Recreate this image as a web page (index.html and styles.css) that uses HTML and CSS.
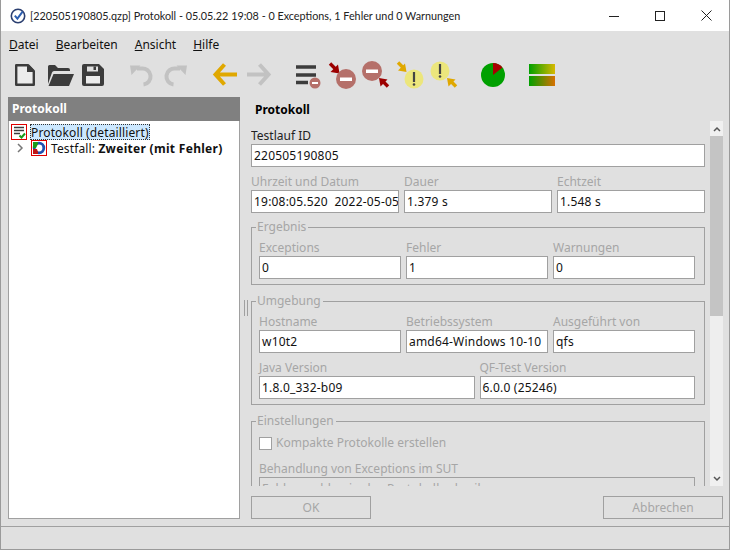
FILE: index.html
```html
<!DOCTYPE html>
<html lang="de">
<head>
    <meta charset="UTF-8">
    <title>Protokoll</title>
    <link rel="stylesheet" href="styles.css">
</head>
<body>
<div class="window">
    <div class="titlebar">
        <svg class="app-icon" width="16" height="16" viewBox="0 0 16 16">
            <circle cx="8" cy="8" r="6.7" fill="#fff" stroke="#2b3f70" stroke-width="1.6"/>
            <path d="M4.800 7.600 7.400 10.600 12.600 3.600" fill="none" stroke="#2d5fb0" stroke-width="2"/>
        </svg>
        <div class="title">[220505190805.qzp] Protokoll - 05.05.22 19:08 - 0 Exceptions, 1 Fehler und 0 Warnungen</div>
        <div class="winbtn"><svg width="10" height="10" viewBox="0 0 10 10"><path d="M0 5.500H10" stroke="#222"/></svg></div>
        <div class="winbtn"><svg width="10" height="10" viewBox="0 0 10 10"><rect x=".5" y=".5" width="9" height="9" fill="none" stroke="#222"/></svg></div>
        <div class="winbtn"><svg width="11" height="11" viewBox="0 0 11 11"><path d="M.5 .5 10.500 10.500M10.500 .5 .5 10.500" stroke="#222"/></svg></div>
    </div>

    <div class="menubar">
        <span class="menu"><u>D</u>atei</span>
        <span class="menu"><u>B</u>earbeiten</span>
        <span class="menu"><u>A</u>nsicht</span>
        <span class="menu"><u>H</u>ilfe</span>
    </div>

    <div class="toolbar">
        <div class="toolgroup">
            <svg class="tool" viewBox="0 0 34 32"><path d="M8.200 6.200H20L25.800 12V25.800H8.200Z" fill="#ececec" stroke="#3c3c3c" stroke-width="2.400" stroke-linejoin="round"/><path d="M19 6H21L26 11V13H19Z" fill="#3c3c3c"/></svg>
            <svg class="tool" viewBox="0 0 34 32"><path d="M6 25V7.500Q6 6 7.500 6H13L16 9H26Q28 9 28 11V12H12Q10.500 12 10 13.500Z" fill="#3c3c3c"/><path d="M6.500 27 11.500 15H32L27 27Z" fill="#3c3c3c"/></svg>
            <svg class="tool" viewBox="0 0 34 32"><path d="M8 5H23L28 10V25Q28 27 26 27H8Q6 27 6 25V7Q6 5 8 5Z" fill="#3c3c3c"/><rect x="11" y="7.500" width="11" height="5" fill="#e0e0e0"/><rect x="17.500" y="7.500" width="2.500" height="3.500" fill="#3c3c3c"/><rect x="10" y="17" width="14" height="7.500" fill="#ececec"/></svg>
        </div>
        <div class="toolgroup">
            <svg class="tool" viewBox="0 0 34 32"><path d="M12 9.500H16.500A8 8 0 0 1 18.500 25.500" fill="none" stroke="#c2c2c2" stroke-width="4"/><path d="M5 6.500H15.500L6.500 16Z" fill="#c2c2c2"/></svg>
            <svg class="tool" viewBox="0 0 34 32"><path d="M21 9.500H16.500A8 8 0 0 0 14.500 25.500" fill="none" stroke="#c2c2c2" stroke-width="4"/><path d="M28 6.500H17.500L26.500 16Z" fill="#c2c2c2"/></svg>
        </div>
        <div class="toolgroup">
            <svg class="tool" viewBox="0 0 34 32"><path d="M29 15.500H8M16.500 5.500 7.500 15.500 16.500 25.500" fill="none" stroke="#e0a800" stroke-width="4"/></svg>
            <svg class="tool" viewBox="0 0 34 32"><path d="M5 15.500H26M17.500 5.500 26.500 15.500 17.500 25.500" fill="none" stroke="#c2c2c2" stroke-width="4"/></svg>
        </div>
        <div class="toolgroup">
            <svg class="tool" viewBox="0 0 34 32">
                <path d="M5 8H25M5 16H25M5 23.500H17" stroke="#3c3c3c" stroke-width="3.400"/>
                <circle cx="24" cy="24" r="5.500" fill="#b5706a"/><rect x="21" y="23" width="6" height="2" fill="#fff"/>
            </svg>
            <svg class="tool" viewBox="0 0 34 32">
                <path d="M5 4.500 10.500 10" stroke="#9c0000" stroke-width="3.400"/><path d="M14.500 14.500 5.500 13 13 5.500Z" fill="#9c0000"/>
                <circle cx="21" cy="20" r="10" fill="#b5706a"/><rect x="15" y="18.500" width="12" height="3.500" fill="#fff"/>
            </svg>
            <svg class="tool" viewBox="0 0 34 32">
                <circle cx="13" cy="12" r="10" fill="#b5706a"/><rect x="7" y="10.500" width="12" height="3.500" fill="#fff"/>
                <path d="M29 27.500 24 22.500" stroke="#9c0000" stroke-width="3.400"/><path d="M20 19 28.500 20.500 21.500 27.500Z" fill="#9c0000"/>
            </svg>
            <svg class="tool" viewBox="0 0 34 32">
                <path d="M5 3.500 10 8.500" stroke="#e0a800" stroke-width="3.400"/><path d="M13.500 13 5 11.500 12 4.500Z" fill="#e0a800"/>
                <circle cx="21" cy="20" r="9.500" fill="#ece67c"/><path d="M21 13V23" stroke="#444" stroke-width="2.200"/><circle cx="21" cy="25.500" r="1.300" fill="#444"/>
            </svg>
            <svg class="tool" viewBox="0 0 34 32">
                <circle cx="13" cy="12" r="9.500" fill="#ece67c"/><path d="M13 5V15" stroke="#444" stroke-width="2.200"/><circle cx="13" cy="17.500" r="1.300" fill="#444"/>
                <path d="M29 27.500 24 22.500" stroke="#e0a800" stroke-width="3.400"/><path d="M20 19 28.500 20.500 21.500 27.500Z" fill="#e0a800"/>
            </svg>
        </div>
        <div class="toolgroup">
            <svg class="tool" viewBox="0 0 34 32">
                <circle cx="17" cy="16" r="12" fill="#00a000"/>
                <path d="M17 16V4A12 12 0 0 1 26.500 8.600Z" fill="#a80000"/>
            </svg>
        </div>
        <div class="toolgroup">
            <svg class="tool" viewBox="0 0 34 32">
                <defs>
                    <linearGradient id="barTop"><stop offset="0" stop-color="#00a000"/><stop offset="1" stop-color="#d8b800"/></linearGradient>
                    <linearGradient id="barBottom"><stop offset="0" stop-color="#00a000"/><stop offset="1" stop-color="#d87000"/></linearGradient>
                </defs>
                <rect x="4" y="5" width="26" height="10" fill="url(#barTop)"/>
                <rect x="4" y="17" width="26" height="10" fill="url(#barBottom)"/>
            </svg>
        </div>
    </div>

    <div class="main">
        <div class="treepanel">
            <div class="treehead">Protokoll</div>
            <div class="tree">
                <div class="treerow">
                    <svg class="nodeicon" viewBox="0 0 16 16">
                        <rect x=".5" y=".5" width="15" height="15" fill="#fff" stroke="#e00000"/>
                        <path d="M3 3.500H13M3 6.500H13M3 9.500H9" stroke="#3c3c3c" stroke-width="1.600"/>
                        <path d="M8.500 11.500 10.500 13.500 14 9.500" fill="none" stroke="#1a9a1a" stroke-width="2"/>
                    </svg>
                    <span class="nodetext selected">Protokoll (detailliert)</span>
                </div>
                <div class="treerow child">
                    <svg class="expander" width="8" height="10" viewBox="0 0 8 10"><path d="M2 1 6 5 2 9" fill="none" stroke="#777" stroke-width="1.500"/></svg>
                    <svg class="nodeicon" viewBox="0 0 16 16">
                        <rect x=".5" y=".5" width="15" height="15" fill="#fff" stroke="#e00000"/>
                        <circle cx="8" cy="8" r="4.800" fill="none" stroke="#1f50b0" stroke-width="2.800"/>
                        <path d="M2 2H7V4L5 8H2Z" fill="#1a9a1a"/>
                        <path d="M2 9H6L7 12V14H2Z" fill="#c01818"/>
                    </svg>
                    <span class="nodetext">Testfall: <b>Zweiter (mit Fehler)</b></span>
                </div>
            </div>
        </div>

        <div class="splitter"><div class="grip"></div></div>

        <div class="detail">
            <div class="detailhead">Protokoll</div>
            <div class="scrollpane">
                <div class="form">
                    <div class="row">
                        <div class="field">
                            <label class="active">Testlauf ID</label>
                            <div class="input">220505190805</div>
                        </div>
                    </div>
                    <div class="row">
                        <div class="field"><label>Uhrzeit und Datum</label><div class="input">19:08:05.520&nbsp; 2022-05-05</div></div>
                        <div class="field"><label>Dauer</label><div class="input">1.379 s</div></div>
                        <div class="field"><label>Echtzeit</label><div class="input">1.548 s</div></div>
                    </div>
                    <fieldset class="group">
                        <legend>Ergebnis</legend>
                        <div class="row">
                            <div class="field"><label>Exceptions</label><div class="input">0</div></div>
                            <div class="field"><label>Fehler</label><div class="input">1</div></div>
                            <div class="field"><label>Warnungen</label><div class="input">0</div></div>
                        </div>
                    </fieldset>
                    <fieldset class="group">
                        <legend>Umgebung</legend>
                        <div class="row">
                            <div class="field"><label>Hostname</label><div class="input">w10t2</div></div>
                            <div class="field"><label>Betriebssystem</label><div class="input">amd64-Windows 10-10</div></div>
                            <div class="field"><label>Ausgeführt von</label><div class="input">qfs</div></div>
                        </div>
                        <div class="row">
                            <div class="field"><label>Java Version</label><div class="input">1.8.0_332-b09</div></div>
                            <div class="field"><label>QF-Test Version</label><div class="input">6.0.0 (25246)</div></div>
                        </div>
                    </fieldset>
                    <fieldset class="group">
                        <legend>Einstellungen</legend>
                        <div class="check"><span class="box"></span><span>Kompakte Protokolle erstellen</span></div>
                        <div class="field">
                            <label>Behandlung von Exceptions im SUT</label>
                            <div class="input muted">Fehler melden in das Protokoll schreiben</div>
                        </div>
                    </fieldset>
                </div>
                <div class="scrollbar">
                    <div class="sbtn"><svg width="8" height="6" viewBox="0 0 8 6"><path d="M1 5 4 2 7 5" fill="none" stroke="#555" stroke-width="1.500"/></svg></div>
                    <div class="thumb"></div>
                    <div class="track"></div>
                    <div class="sbtn"><svg width="8" height="6" viewBox="0 0 8 6"><path d="M1 1 4 4 7 1" fill="none" stroke="#555" stroke-width="1.500"/></svg></div>
                </div>
            </div>
            <div class="buttons">
                <div class="btn">OK</div>
                <div class="btn">Abbrechen</div>
            </div>
        </div>
    </div>

    <div class="statusbar"></div>
</div>
</body>
</html>
```

FILE: styles.css
```css
* {
    box-sizing: border-box;
}
body {
    margin: 0;
    font-family: "Noto Sans", "Open Sans", sans-serif;
    font-size: 12px;
    line-height: 16px;
    color: #111;
}
.window {
    width: 730px;
    height: 550px;
    display: flex;
    flex-direction: column;
    background-color: #e0e0e0;
    border: 1px solid #9a9a9a;
    border-top: none;
    overflow: hidden;
}
.titlebar {
    height: 31px;
    display: flex;
    align-items: center;
    background-color: #fff;
    padding-left: 9px;
    flex: none;
}
.app-icon {
    margin-right: 4px;
}
.title {
    flex: 1;
    font-family: Lato, "Noto Sans", sans-serif;
    font-size: 10.8px;
    white-space: nowrap;
    color: #222;
}
.winbtn {
    width: 46px;
    height: 31px;
    display: flex;
    align-items: center;
    justify-content: center;
}
.menubar {
    height: 27px;
    display: flex;
    align-items: center;
    padding-left: 8px;
    flex: none;
}
.menu {
    margin-right: 17px;
}
.toolbar {
    height: 39px;
    display: flex;
    padding: 1px 0 0 7px;
    gap: 15px;
    flex: none;
}
.toolgroup {
    display: flex;
}
.tool {
    width: 34px;
    height: 32px;
}
.main {
    flex: 1;
    display: flex;
    padding: 0 6px 7px 7px;
    min-height: 0;
}
.treepanel {
    width: 232px;
    display: flex;
    flex-direction: column;
    border: 1px solid #a0a0a0;
    border-top: none;
    flex: none;
}
.treehead {
    height: 24px;
    padding-left: 4px;
    margin: 0 -1px;
    background-color: #808080;
    color: #fff;
    font-weight: bold;
    line-height: 24px;
}
.tree {
    flex: 1;
    background-color: #fff;
    padding-top: 3px;
}
.treerow {
    height: 16px;
    display: flex;
    align-items: center;
    padding-left: 2px;
    white-space: nowrap;
}
.treerow.child {
    padding-left: 7px;
}
.expander {
    margin-right: 7px;
}
.nodeicon {
    width: 16px;
    height: 16px;
    margin-right: 3px;
    flex: none;
}
.treerow.child .nodeicon {
    margin-right: 4px;
}
.nodetext {
    height: 16px;
    line-height: 18px;
    letter-spacing: 0.13px;
}
.nodetext b {
    letter-spacing: 0.3px;
}
.selected {
    background-color: #cce8ff;
    outline: 1px dotted #333;
    outline-offset: -1px;
    padding: 0 1px;
}
.splitter {
    width: 11px;
    display: flex;
    align-items: center;
    justify-content: center;
    flex: none;
}
.grip {
    width: 4px;
    height: 16px;
    border-left: 1px solid #a0a0a0;
    border-right: 1px solid #a0a0a0;
}
.detail {
    flex: 1;
    display: flex;
    flex-direction: column;
    min-width: 0;
}
.detailhead {
    height: 24px;
    padding-left: 4px;
    font-weight: bold;
    line-height: 26px;
    color: #000;
}
.scrollpane {
    height: 365px;
    display: flex;
    gap: 5px;
    overflow: hidden;
}
.form {
    width: 454px;
    flex: none;
    padding-top: 7px;
}
.row {
    display: flex;
    gap: 5px;
}
.row + .row {
    margin-top: 7px;
}
.field {
    flex: 1;
    min-width: 0;
}
label {
    display: block;
    height: 16px;
    color: #a6a6a6;
    white-space: nowrap;
}
label.active {
    color: #222;
}
.input {
    height: 23px;
    padding: 0 2px;
    line-height: 21px;
    letter-spacing: 0.2px;
    background-color: #fff;
    border: 1px solid #a0a0a0;
    white-space: nowrap;
    overflow: hidden;
    color: #111;
}
.input.muted {
    background-color: #e0e0e0;
    color: #a6a6a6;
}
.group {
    margin: 6px 0 0;
    padding: 5px 9px 5px 7px;
    border: 1px solid #a0a0a0;
    min-width: 0;
}
.group + .group {
    margin-top: 8px;
}
legend {
    padding: 0 2px 0 1px;
    margin-left: -3px;
    color: #a6a6a6;
    line-height: 16px;
}
.check {
    display: flex;
    align-items: center;
    gap: 4px;
    height: 16px;
    margin: 1px 0 10px;
    color: #a6a6a6;
}
.box {
    width: 13px;
    height: 13px;
    background-color: #fff;
    border: 1px solid #a0a0a0;
}
.scrollbar {
    width: 13px;
    display: flex;
    flex-direction: column;
    flex: none;
}
.sbtn {
    height: 15px;
    display: flex;
    align-items: center;
    justify-content: center;
    background-color: #f0f0f0;
    flex: none;
}
.thumb {
    height: 180px;
    background-color: #c4c4c4;
}
.track {
    flex: 1;
    background-color: #eeeeee;
}
.buttons {
    display: flex;
    justify-content: space-between;
    margin-top: 10px;
}
.btn {
    width: 120px;
    height: 23px;
    line-height: 21px;
    border: 1px solid #a0a0a0;
    text-align: center;
    color: #a6a6a6;
}
.statusbar {
    height: 23px;
    border-top: 1px solid #a0a0a0;
    flex: none;
}
```
